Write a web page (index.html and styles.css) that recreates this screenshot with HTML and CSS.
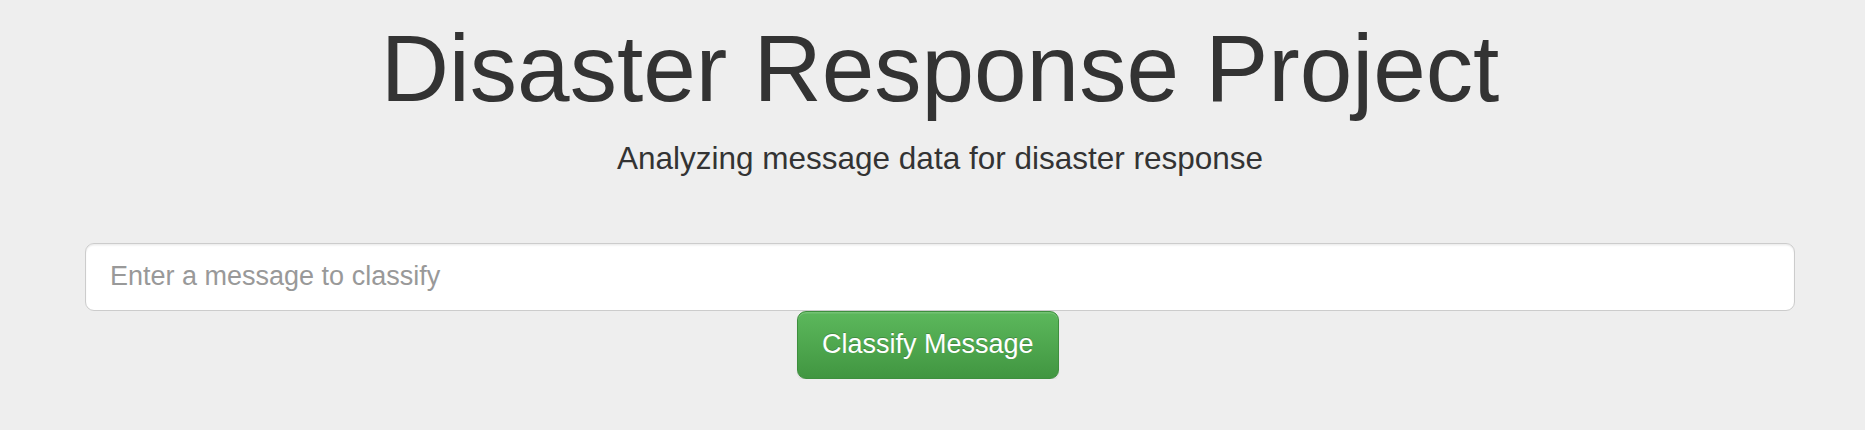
FILE: index.html
```html
<!DOCTYPE html>
<html lang="en">
<head>
<meta charset="utf-8">
<title>Disaster Response Project</title>
<link rel="stylesheet" href="styles.css">
</head>
<body>
<div class="jumbotron">
  <h1 class="title">Disaster Response Project</h1>
  <p class="lead">Analyzing message data for disaster response</p>
  <form class="classify-form">
    <input class="message-input" type="text" name="query" placeholder="Enter a message to classify">
    <div class="actions">
      <button type="submit" class="btn-success">Classify Message</button>
    </div>
  </form>
</div>
</body>
</html>
```
FILE: styles.css
```css
html, body {
  margin: 0;
  padding: 0;
}
body {
  background: #eeeeee;
  color: #333333;
  font-family: "Liberation Sans", Arial, Helvetica, sans-serif;
}
.jumbotron {
  padding: 17px 70px 0 85px;
}
.title {
  margin: 0 0 15px;
  font-size: 94.5px;
  line-height: 1.1;
  font-weight: 400;
  text-align: center;
}
.lead {
  margin: 0;
  font-size: 31.5px;
  line-height: 45px;
  text-align: center;
}
.classify-form {
  margin-top: 62px;
}
.message-input {
  display: block;
  box-sizing: border-box;
  width: 100%;
  height: 68px;
  margin: 0;
  padding: 0 24px;
  font-family: inherit;
  font-size: 27px;
  color: #555;
  background: #fff;
  border: 1.5px solid #cccccc;
  border-radius: 9px;
  box-shadow: inset 0 1.5px 1.5px rgba(0,0,0,.075);
  outline: none;
}
.message-input::placeholder {
  color: #999999;
}
.actions {
  display: flex;
  padding-left: 712px;
}
.btn-success {
  box-sizing: border-box;
  height: 68px;
  padding: 0 24px;
  font-family: inherit;
  font-size: 27px;
  color: #fff;
  background-image: linear-gradient(to bottom, #5cb85c 0, #419641 100%);
  border: 1.5px solid #3e8f3e;
  border-radius: 9px;
  text-shadow: 0 -1.5px 0 rgba(0,0,0,.2);
  box-shadow: inset 0 1.5px 0 rgba(255,255,255,.15), 0 1.5px 1.5px rgba(0,0,0,.075);
  cursor: pointer;
}
```
